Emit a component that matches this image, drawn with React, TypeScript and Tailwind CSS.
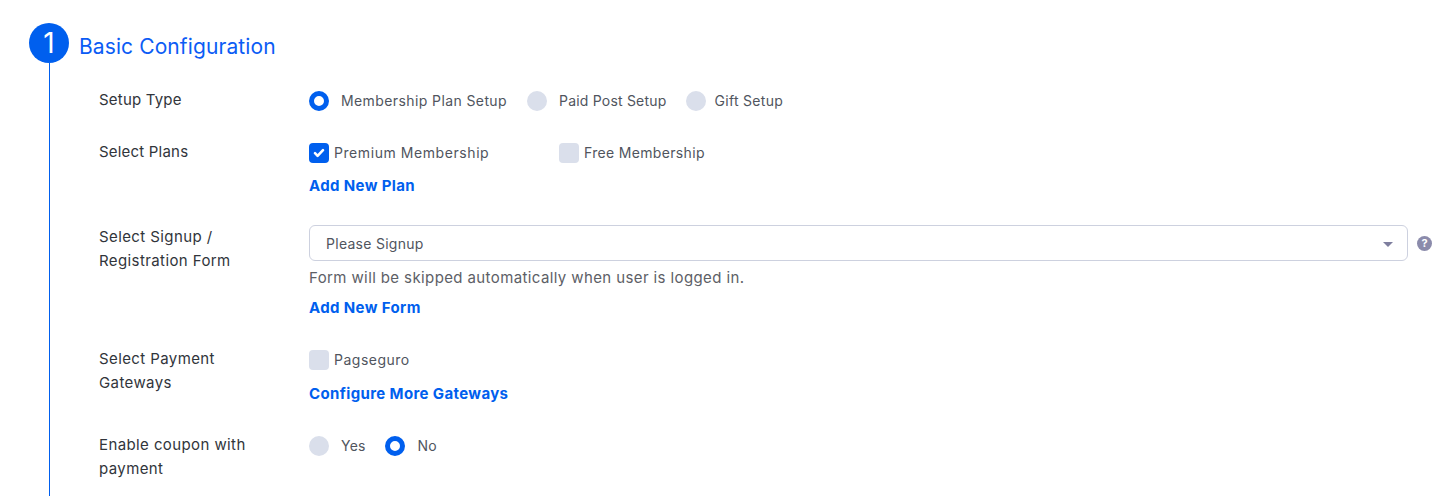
import React from "react";

const font = "font-['Inter','Open_Sans',sans-serif]";

function Radio({ on }: { on?: boolean }) {
  return on ? (
    <span className="block h-5 w-5 shrink-0 rounded-full border-[5px] border-[#005fee] bg-white" />
  ) : (
    <span className="block h-5 w-5 shrink-0 rounded-full bg-[#dadfeb]" />
  );
}

function Check({ on }: { on?: boolean }) {
  return on ? (
    <span className="flex h-5 w-5 shrink-0 items-center justify-center rounded-[4px] bg-[#005fee]">
      <svg width="12" height="10" viewBox="0 0 12 10" fill="none">
        <path d="M2 5.2 4.6 7.8 10 2.2" stroke="#fff" strokeWidth="2.6" strokeLinecap="round" strokeLinejoin="round" />
      </svg>
    </span>
  ) : (
    <span className="block h-5 w-5 shrink-0 rounded-[4px] bg-[#dadfeb]" />
  );
}

function Label({ children, className = "tracking-[0.4px]" }: { children: React.ReactNode; className?: string }) {
  return <div className={`w-[210px] shrink-0 pr-6 text-[15px] leading-6 text-[#31353b] ${className}`}>{children}</div>;
}

function LinkText({ children, className = "" }: { children: React.ReactNode; className?: string }) {
  return <div className={`text-[15px] font-bold leading-5 tracking-[0.37px] text-[#005fee] ${className}`}>{children}</div>;
}

export default function App() {
  return (
    <div className={`${font} h-[496px] w-[1442px] overflow-hidden bg-white pl-[29px] pt-[23px]`}>
      <div className="flex items-center">
        <div className="flex h-10 w-10 items-center justify-center rounded-full bg-[#005fee] text-[28px] font-normal text-white">1</div>
        <h2 className="ml-[10px] pt-2 text-[21px] font-normal tracking-[0.1px] text-[#0b5cf5]">Basic Configuration</h2>
      </div>
      <div className="ml-5 h-[433px] border-l border-[#005fee] pl-[49px] pt-[25px]">
        <div className="flex">
          <Label className="tracking-[0.2px]">Setup Type</Label>
          <div className="flex h-6 items-center pt-[1px] text-sm text-[#50555e]">
            <Radio on />
            <span className="ml-3 mr-5 tracking-[0.4px]">Membership Plan Setup</span>
            <Radio />
            <span className="ml-3 mr-5 tracking-[0.2px]">Paid Post Setup</span>
            <Radio />
            <span className="ml-2 tracking-[0.3px]">Gift Setup</span>
          </div>
        </div>

        <div className="mt-[29px] flex">
          <Label className="-mt-px tracking-[0.2px]">Select Plans</Label>
          <div className="text-sm text-[#50555e]">
            <div className="flex h-6 items-center">
              <div className="flex w-[250px] items-center">
                <Check on />
                <span className="ml-[5px] tracking-[0.57px]">Premium Membership</span>
              </div>
              <Check />
              <span className="ml-[5px] tracking-[0.33px]">Free Membership</span>
            </div>
            <LinkText className="mt-[11px]">Add New Plan</LinkText>
          </div>
        </div>

        <div className="mt-[29px] flex">
          <Label>Select Signup / Registration Form</Label>
          <div className="flex-1">
            <div className="flex items-center">
              <div className="flex h-[36px] w-[1099px] items-center justify-between rounded-md border border-[#cdd1df] pl-4 pr-[14px] pt-[2px] text-sm tracking-[0.28px] text-[#50555e]">
                <span>Please Signup</span>
                <span className="h-0 w-0 border-x-[5px] border-t-[5px] border-x-transparent border-t-[#7e7e9e]" />
              </div>
              <span className="ml-[9px] flex h-[15px] w-[15px] items-center justify-center rounded-full bg-[#8b8bab] text-[11px] font-bold text-white">?</span>
            </div>
            <div className="mt-[5px] text-[15px] leading-6 tracking-[0.39px] text-[#5d6066]">Form will be skipped automatically when user is logged in.</div>
            <LinkText className="mt-[8px]">Add New Form</LinkText>
          </div>
        </div>

        <div className="mt-[29px] flex">
          <Label>Select Payment Gateways</Label>
          <div className="pt-[1px] text-sm text-[#50555e]">
            <div className="flex h-6 items-center">
              <Check />
              <span className="ml-[5px] tracking-[0.5px]">Pagseguro</span>
            </div>
            <LinkText className="mt-[12px]">Configure More Gateways</LinkText>
          </div>
        </div>

        <div className="mt-[29px] flex">
          <Label>Enable coupon with payment</Label>
          <div className="mt-px flex h-6 items-center text-sm tracking-[0.2px] text-[#50555e]">
            <Radio />
            <span className="ml-3 mr-[19px]">Yes</span>
            <Radio on />
            <span className="ml-[13px]">No</span>
          </div>
        </div>
      </div>
    </div>
  );
}
